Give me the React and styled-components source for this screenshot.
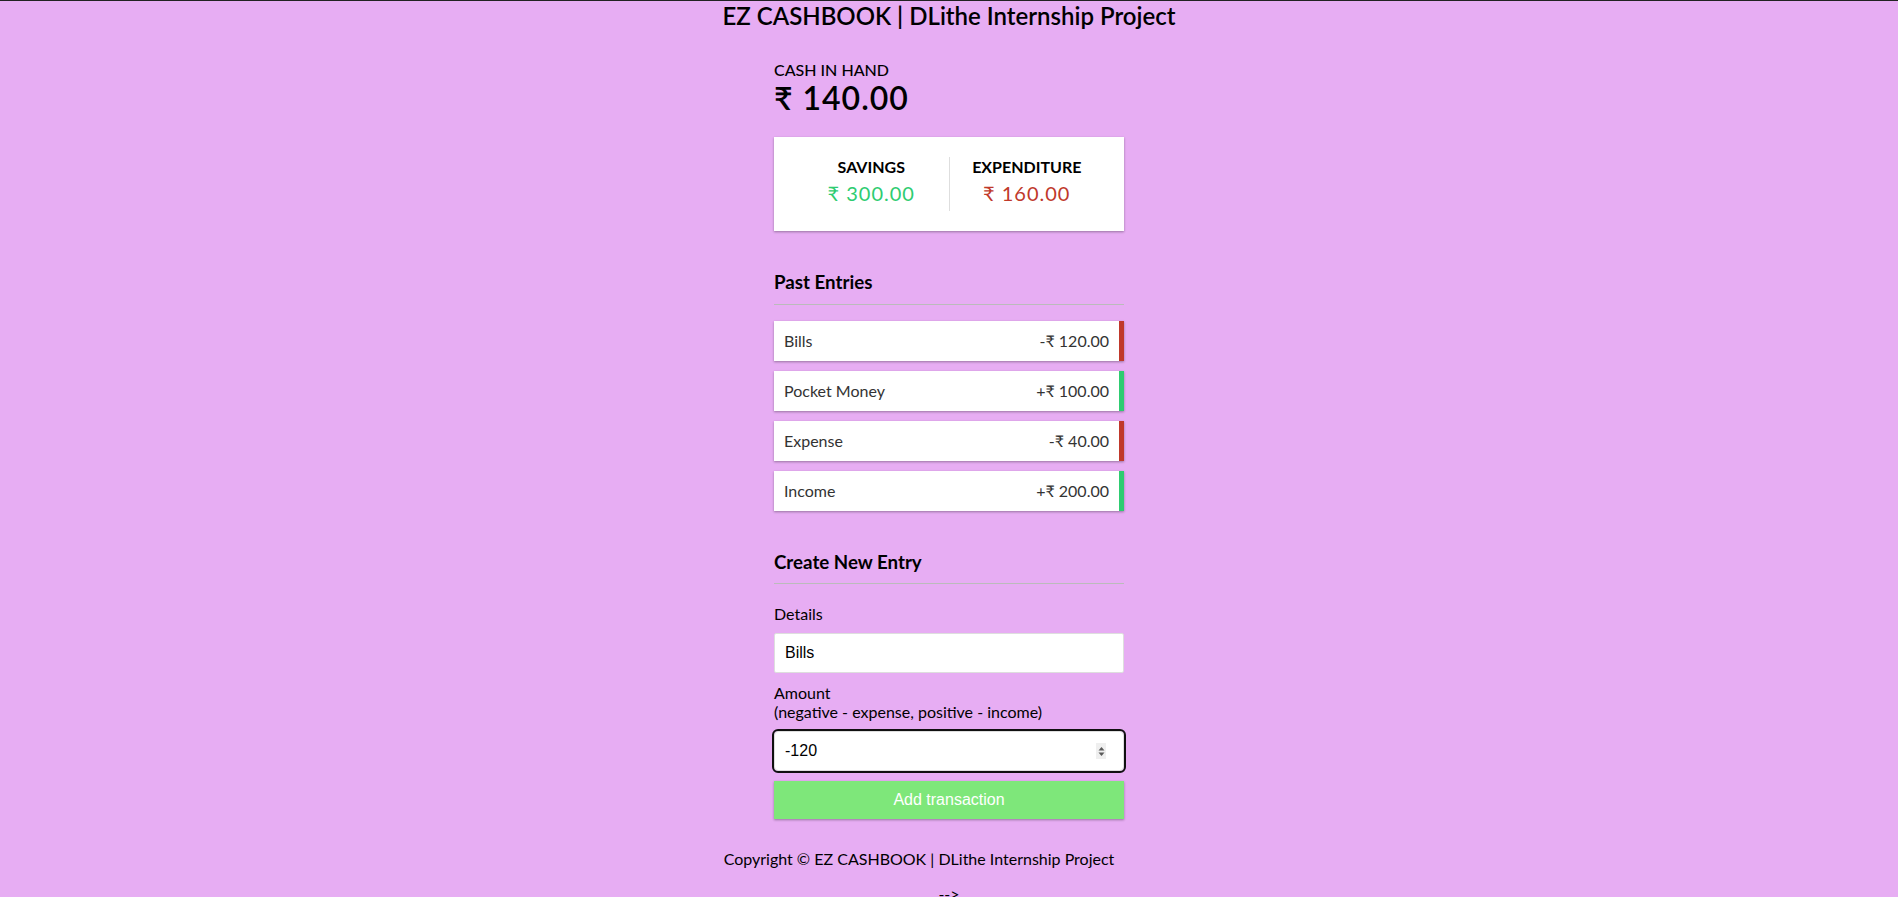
import React from "react";
import styled, { createGlobalStyle, css } from "styled-components";

const shadow = "0 1px 3px rgba(0, 0, 0, 0.12), 0 1px 2px rgba(0, 0, 0, 0.24)";
const green = "#2ecc71";
const red = "#c0392b";

const GlobalStyle = createGlobalStyle`
  * { box-sizing: border-box; }
  html, body { margin: 0; }
  body {
    background-color: #e7adf3;
    border-top: 1px solid #222;
    font-family: Lato, "Open Sans", sans-serif;
    color: #000;
  }
`;

const Page = styled.div`
  display: flex;
  flex-direction: column;
  align-items: center;
`;

const Title = styled.h2`
  margin: 0;
  font-size: 24px;
  font-weight: 600;
  line-height: 29px;
`;

const Container = styled.div`
  width: 350px;
  margin: 30px auto 0;
`;

const Caption = styled.h4`
  margin: 0;
  font-size: 16px;
  font-weight: ${(p) => (p.$light ? 500 : 700)};
  text-transform: uppercase;
  line-height: 19px;
`;

const Balance = styled.h1`
  margin: 0;
  font-size: 32px;
  font-weight: 600;
  letter-spacing: 1px;
  line-height: 38px;
`;

const SummaryCard = styled.div`
  background: #fff;
  box-shadow: ${shadow};
  padding: 20px;
  display: flex;
  justify-content: space-between;
  margin: 20px 0 40px;
`;

const SummaryCol = styled.div`
  flex: 1;
  text-align: center;
  ${(p) => p.$divider && css`border-right: 1px solid #dedede;`}
`;

const Money = styled.p`
  font-size: 20px;
  letter-spacing: 1px;
  margin: 5px 0;
  line-height: 25px;
  color: ${(p) => (p.$plus ? green : red)};
`;

const SectionTitle = styled.h3`
  font-size: 18.72px;
  line-height: 22.5px;
  border-bottom: 1px solid #bbb;
  padding-bottom: 10px;
  margin: 0 0 10px;
`;

const List = styled.ul`
  list-style: none;
  padding: 0;
  margin: 16px 0 40px;
  display: flex;
  flex-direction: column;
  gap: 10px;
`;

const Item = styled.li`
  background: #fff;
  box-shadow: ${shadow};
  color: #333;
  display: flex;
  justify-content: space-between;
  padding: 10px;
  font-size: 16px;
  line-height: 20px;
  border-right: 5px solid ${(p) => (p.$plus ? green : red)};
`;

const Form = styled.form`
  display: flex;
  flex-direction: column;
`;

const Field = styled.div`
  display: flex;
  flex-direction: column;
`;

const Label = styled.label`
  margin: 10px 0;
  font-size: 16px;
  line-height: 19px;
`;

const InputWrap = styled.div`
  position: relative;
`;

const Input = styled.input`
  border: 1px solid #dedede;
  border-radius: 2px;
  display: block;
  font-family: "Liberation Sans", Arial, sans-serif;
  font-size: 16px;
  line-height: 18px;
  padding: 10px;
  width: 100%;
  color: #000;
  background: #fff;
  ${(p) =>
    p.$focused &&
    css`
      outline: 2px solid #101010;
      border-radius: 4px;
    `}
  &::-webkit-inner-spin-button,
  &::-webkit-outer-spin-button {
    -webkit-appearance: none;
    margin: 0;
  }
  -moz-appearance: textfield;
`;

const Spinner = styled.span`
  position: absolute;
  right: 18px;
  top: 50%;
  transform: translateY(-50%);
  width: 10px;
  height: 16px;
  background: #efefef;
  display: flex;
  align-items: center;
  justify-content: center;
`;

const Button = styled.button`
  background-color: #7ee77a;
  box-shadow: ${shadow};
  color: #fff;
  border: 0;
  display: block;
  font-family: "Liberation Sans", Arial, sans-serif;
  font-size: 16px;
  line-height: 18px;
  margin: 10px 0 30px;
  padding: 10px;
  width: 100%;
`;

const Footer = styled.p`
  margin: 0 0 16px;
  padding-right: 60px;
  font-size: 16px;
  line-height: 19px;
  text-align: center;
  width: 100%;
`;

const Stray = styled.div`
  font-size: 16px;
  line-height: 19px;
`;

const entries = [
  { text: "Bills", amount: -120 },
  { text: "Pocket Money", amount: 100 },
  { text: "Expense", amount: -40 },
  { text: "Income", amount: 200 },
];

const fmt = (n) => `${n < 0 ? "-" : "+"}₹ ${Math.abs(n).toFixed(2)}`;

export default function App() {
  return (
    <>
      <GlobalStyle />
      <Page>
        <Title>EZ CASHBOOK | DLithe Internship Project</Title>
        <Container>
          <Caption $light>Cash in hand</Caption>
          <Balance>₹ 140.00</Balance>
          <SummaryCard>
            <SummaryCol $divider>
              <Caption>Savings</Caption>
              <Money $plus>₹ 300.00</Money>
            </SummaryCol>
            <SummaryCol>
              <Caption>Expenditure</Caption>
              <Money>₹ 160.00</Money>
            </SummaryCol>
          </SummaryCard>
          <SectionTitle>Past Entries</SectionTitle>
          <List>
            {entries.map((e) => (
              <Item key={e.text} $plus={e.amount > 0}>
                <span>{e.text}</span>
                <span>{fmt(e.amount)}</span>
              </Item>
            ))}
          </List>
          <SectionTitle>Create New Entry</SectionTitle>
          <Form onSubmit={(e) => e.preventDefault()}>
            <Field>
              <Label htmlFor="text">Details</Label>
              <Input id="text" type="text" defaultValue="Bills" />
            </Field>
            <Field>
              <Label htmlFor="amount">
                Amount
                <br />
                (negative - expense, positive - income)
              </Label>
              <InputWrap>
                <Input id="amount" type="number" defaultValue="-120" $focused />
                <Spinner>
                  <svg width="7" height="11" viewBox="0 0 7 11">
                    <path d="M3.5 1 L6.5 4.5 L0.5 4.5 Z" fill="#5a5a5a" />
                    <path d="M3.5 10 L6.5 6.5 L0.5 6.5 Z" fill="#5a5a5a" />
                  </svg>
                </Spinner>
              </InputWrap>
            </Field>
            <Button type="submit">Add transaction</Button>
          </Form>
        </Container>
        <Footer>Copyright © EZ CASHBOOK | DLithe Internship Project</Footer>
        <Stray>--&gt;</Stray>
      </Page>
    </>
  );
}
